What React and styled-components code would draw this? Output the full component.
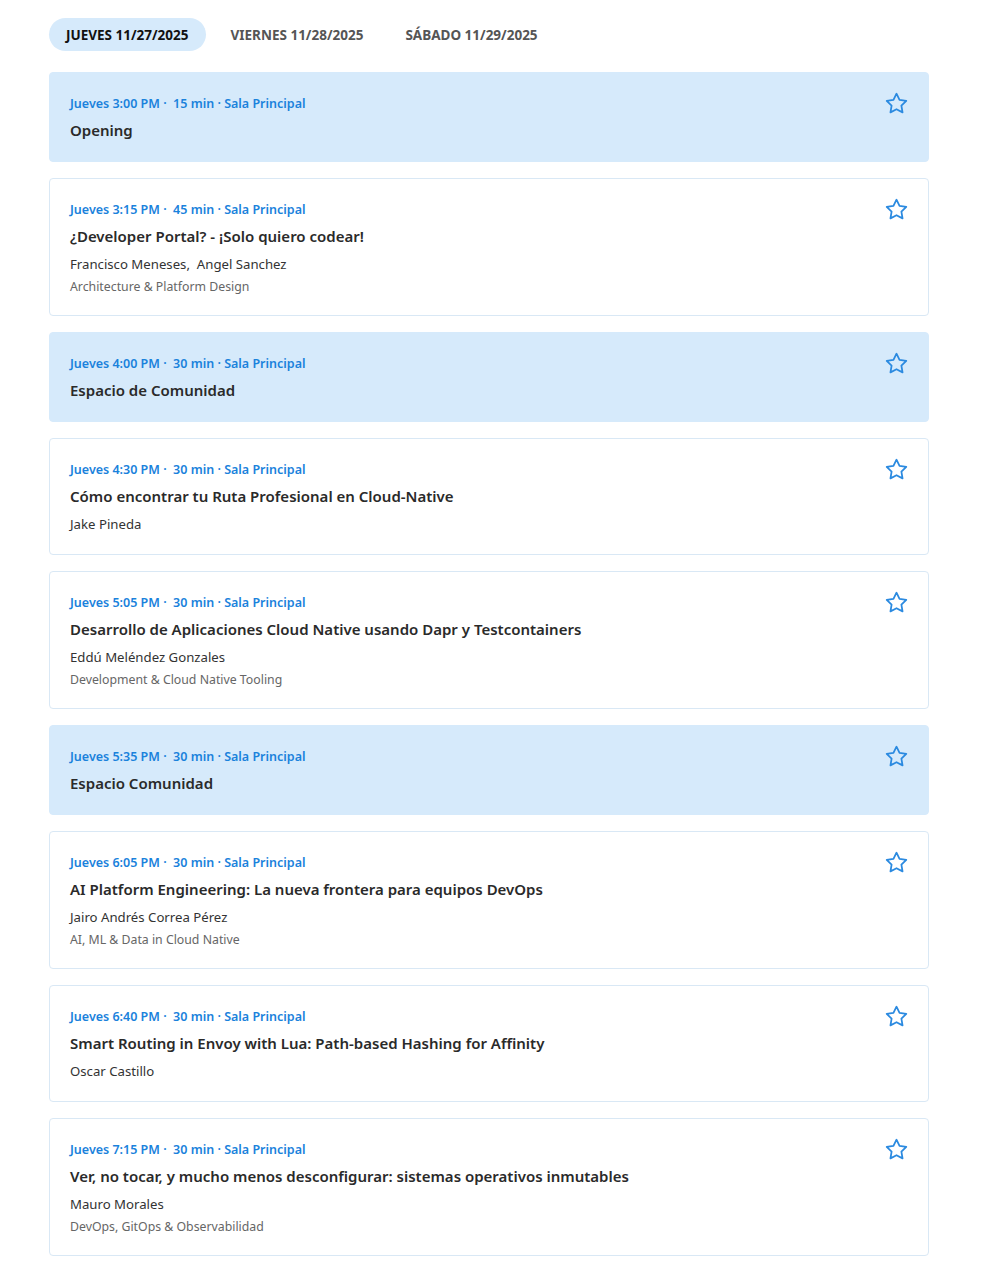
import React from 'react'
import styled, { createGlobalStyle } from 'styled-components'

const Global = createGlobalStyle`
  body {
    margin: 0;
    background: #ffffff;
    font-family: "Noto Sans", "Open Sans", sans-serif;
  }
`;

const Page = styled.div`
  padding: 18px 71px 16px 49px;
  display: flex;
  flex-direction: column;
  gap: 21px;
`;

const Tabs = styled.div`
  display: flex;
  gap: 8px;
`;

const Tab = styled.button`
  border: none;
  height: 33px;
  padding: 0 17px;
  border-radius: 17px;
  font-family: inherit;
  font-size: 13.5px;
  font-weight: 700;
  color: ${p => (p.active ? '#111' : '#555')};
  background: ${p => (p.active ? '#d6eafb' : 'transparent')};
  cursor: pointer;
`;

const List = styled.div`
  display: flex;
  flex-direction: column;
  gap: 16px;
`;

const Card = styled.div`
  position: relative;
  padding: 21px 20px 20px 20px;
  border: 1px solid ${p => (p.highlight ? '#d6eafb' : '#d9e8f5')};
  border-radius: 4px;
  background: ${p => (p.highlight ? '#d6eafb' : '#ffffff')};
`;

const Meta = styled.div`
  font-size: 12.5px;
  font-weight: 600;
  line-height: 20px;
  color: #1a82dc;
  white-space: pre;
`;

const Title = styled.div`
  margin-top: 5px;
  font-size: 15px;
  font-weight: 600;
  line-height: 22px;
  color: #2a2a2a;
`;

const Speakers = styled.div`
  margin-top: 7px;
  font-size: 13.2px;
  line-height: 20px;
  color: #333;
  white-space: pre;
`;

const Topic = styled.div`
  margin-top: 4px;
  font-size: 12.3px;
  line-height: 17px;
  color: #666;
`;

const StarButton = styled.button`
  position: absolute;
  top: 17px;
  right: 19px;
  width: 26px;
  height: 26px;
  padding: 0;
  border: none;
  background: transparent;
  display: flex;
  align-items: center;
  justify-content: center;
  cursor: pointer;
`;

const Star = () => (
  <svg width="25" height="25" viewBox="0 0 24 24" fill="none" stroke="#2b8ae0" strokeWidth="1.7" strokeLinejoin="round">
    <path d="M12 2.6l2.9 5.9 6.5.95-4.7 4.6 1.1 6.45L12 17.45l-5.8 3.05 1.1-6.45-4.7-4.6 6.5-.95z" />
  </svg>
);

const sessions = [
  { time: '3:00 PM', dur: '15 min', title: 'Opening', highlight: true },
  { time: '3:15 PM', dur: '45 min', title: '¿Developer Portal? - ¡Solo quiero codear!', speakers: 'Francisco Meneses,  Angel Sanchez', topic: 'Architecture & Platform Design' },
  { time: '4:00 PM', dur: '30 min', title: 'Espacio de Comunidad', highlight: true },
  { time: '4:30 PM', dur: '30 min', title: 'Cómo encontrar tu Ruta Profesional en Cloud-Native', speakers: 'Jake Pineda' },
  { time: '5:05 PM', dur: '30 min', title: 'Desarrollo de Aplicaciones Cloud Native usando Dapr y Testcontainers', speakers: 'Eddú Meléndez Gonzales', topic: 'Development & Cloud Native Tooling' },
  { time: '5:35 PM', dur: '30 min', title: 'Espacio Comunidad', highlight: true },
  { time: '6:05 PM', dur: '30 min', title: 'AI Platform Engineering: La nueva frontera para equipos DevOps', speakers: 'Jairo Andrés Correa Pérez', topic: 'AI, ML & Data in Cloud Native' },
  { time: '6:40 PM', dur: '30 min', title: 'Smart Routing in Envoy with Lua: Path-based Hashing for Affinity', speakers: 'Oscar Castillo' },
  { time: '7:15 PM', dur: '30 min', title: 'Ver, no tocar, y mucho menos desconfigurar: sistemas operativos inmutables', speakers: 'Mauro Morales', topic: 'DevOps, GitOps & Observabilidad' },
];

const App = () => {
  return (
    <Page>
      <Global />
      <Tabs>
        <Tab active>JUEVES 11/27/2025</Tab>
        <Tab>VIERNES 11/28/2025</Tab>
        <Tab>SÁBADO 11/29/2025</Tab>
      </Tabs>
      <List>
        {sessions.map(s => (
          <Card key={s.time} highlight={s.highlight}>
            <Meta>{`Jueves ${s.time} ·  ${s.dur} · Sala Principal`}</Meta>
            <Title>{s.title}</Title>
            {s.speakers && <Speakers>{s.speakers}</Speakers>}
            {s.topic && <Topic>{s.topic}</Topic>}
            <StarButton aria-label="Favorito">
              <Star />
            </StarButton>
          </Card>
        ))}
      </List>
    </Page>
  )
}

export default App
